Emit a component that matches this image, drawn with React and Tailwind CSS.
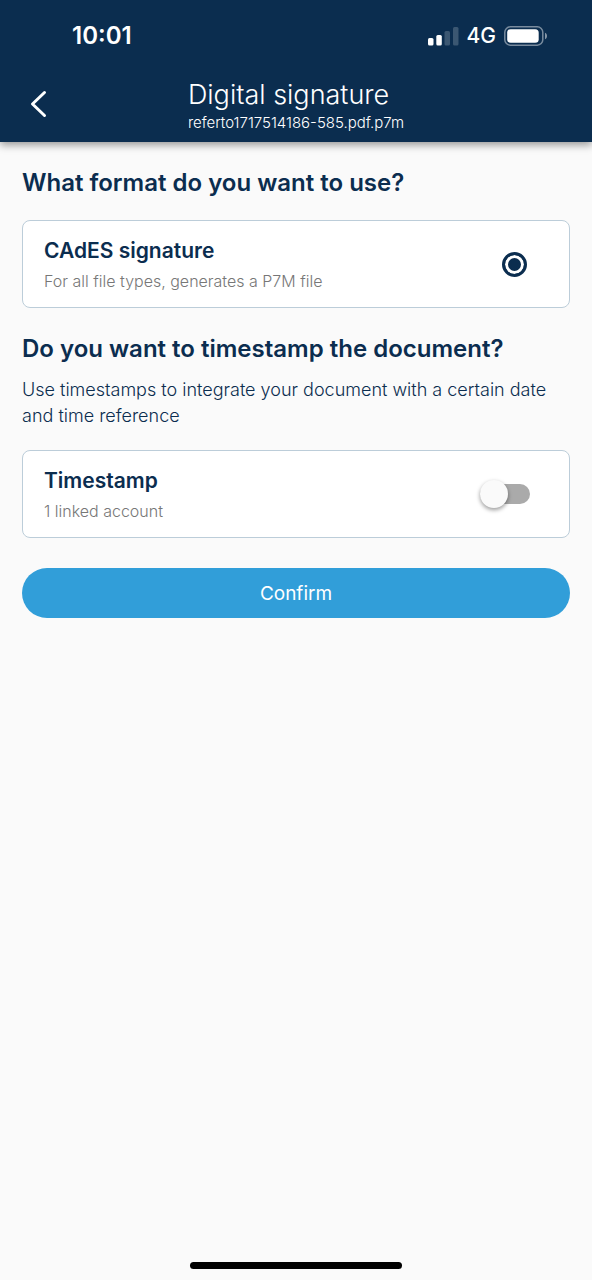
import React, { useState } from 'react';

const StatusBar = () => (
  <div className="flex h-[72px] items-center justify-between pr-11 pl-[72px]">
    <span className="text-2xl font-semibold">10:01</span>
    <div className="flex items-center gap-2">
      <svg width="31" height="20" viewBox="0 0 31 20" fill="currentColor" aria-hidden="true">
        <rect x="0" y="12" width="5.5" height="7.5" rx="1.5" />
        <rect x="8.3" y="9" width="5.5" height="10.5" rx="1.5" />
        <rect x="16.5" y="5" width="5.5" height="14.5" rx="1.5" opacity="0.2" />
        <rect x="25" y="1" width="5.5" height="18.5" rx="1.5" opacity="0.2" />
      </svg>
      <span className="text-[21px] font-medium">4G</span>
      <svg width="44" height="20" viewBox="0 0 44 20" aria-hidden="true">
        <rect x="0.8" y="0.8" width="38" height="18.4" rx="5.5" fill="none" stroke="currentColor" strokeWidth="1.5" opacity="0.45" />
        <rect x="3.2" y="3.2" width="31.5" height="13.6" rx="3.5" fill="currentColor" />
        <path d="M41 6.8c1.3.5 2 1.8 2 3.2s-.7 2.7-2 3.2z" fill="currentColor" opacity="0.5" />
      </svg>
    </div>
  </div>
);

const Header = ({ title, fileName }) => (
  <header className="bg-[#0b2d4f] text-white shadow-[0_3px_8px_rgba(0,0,0,0.4)]">
    <StatusBar />
    <div className="grid h-[70px] grid-cols-[1fr_auto_1fr] items-center">
      <button type="button" aria-label="Back" className="ml-[23px] flex h-12 w-8 items-center justify-center pb-1.5">
        <svg width="18" height="28" viewBox="0 0 18 28" fill="none" stroke="currentColor" strokeWidth="3" strokeLinecap="round" strokeLinejoin="round">
          <path d="M14.5 2.5 2.500 14l12 11.5" />
        </svg>
      </button>
      <div>
        <h1 className="text-[27px] leading-8 font-light">{title}</h1>
        <p className="text-[15px] leading-6 font-light">{fileName}</p>
      </div>
    </div>
  </header>
);

const OptionCard = ({ title, description, children }) => (
  <label className="flex h-[88px] items-center justify-between rounded-lg border border-[#bccdd9] bg-white pr-[39px] pl-[21px]">
    <span className="flex flex-col pt-0.5">
      <span className="text-[21px] leading-8 font-semibold">{title}</span>
      <span className="text-base leading-7 font-light text-[#777777]">{description}</span>
    </span>
    {children}
  </label>
);

export default function App() {
  const [format, setFormat] = useState('cades');
  const [timestamp, setTimestamp] = useState(false);

  return (
    <div className="flex min-h-screen flex-col bg-[#fafafa] font-['Inter',sans-serif] text-[#0b2d4f]">
      <Header title="Digital signature" fileName="referto1717514186-585.pdf.p7m" />

      <main className="flex flex-col px-[22px] pt-[25px]">
        <h2 className="text-2xl leading-8 font-semibold">What format do you want to use?</h2>
        <div className="mt-[21px]">
          <OptionCard title="CAdES signature" description="For all file types, generates a P7M file">
            <input
              type="radio"
              name="format"
              value="cades"
              checked={format === 'cades'}
              onChange={(e) => setFormat(e.target.value)}
              className="mr-[3px] size-[25px] appearance-none rounded-full border-3 border-[#0b2d4f] checked:bg-[#0b2d4f] checked:shadow-[inset_0_0_0_3px_#ffffff]"
            />
          </OptionCard>
        </div>

        <h2 className="mt-[25px] text-2xl leading-8 font-semibold">Do you want to timestamp the document?</h2>
        <p className="mt-3 text-lg leading-[26px] font-light">
          Use timestamps to integrate your document with a certain date and time reference
        </p>
        <div className="mt-[21px]">
          <OptionCard title="Timestamp" description="1 linked account">
            <input
              type="checkbox"
              role="switch"
              checked={timestamp}
              onChange={(e) => setTimestamp(e.target.checked)}
              className="flex h-5 w-[50px] appearance-none items-center rounded-full bg-[#aaaaaa] before:size-7 before:shrink-0 before:rounded-full before:bg-[#fafafa] before:shadow-[0_2px_4px_rgba(0,0,0,0.4)] checked:justify-end"
            />
          </OptionCard>
        </div>

        <button type="button" className="mt-[30px] h-[50px] rounded-full bg-[#319ed9] pt-0.5 text-[19px] text-white">
          Confirm
        </button>
      </main>

      <div className="mx-auto mt-auto mb-[11px] h-[7px] w-[212px] rounded-full bg-black" />
    </div>
  );
}
